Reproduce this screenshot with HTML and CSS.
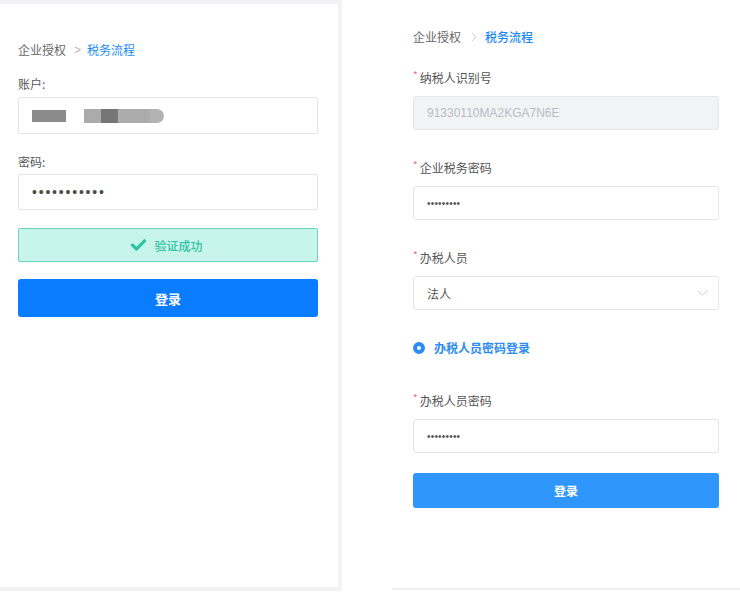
FILE: index.html
```html
<!DOCTYPE html>
<html lang="zh-CN">
<head>
    <meta charset="UTF-8">
    <meta name="viewport" content="width=device-width, initial-scale=1.0">
    <title>税务流程登录</title>
    <link rel="stylesheet" href="styles.css">
</head>
<body>
    <div class="page">
        <!-- old login: account + slider check -->
        <div class="frame">
            <div class="card">
                <div class="crumbs">
                    <span class="crumb">企业授权</span>
                    <span class="crumb-sep">&gt;</span>
                    <span class="crumb-current">税务流程</span>
                </div>

                <div class="label">账户:</div>
                <div class="input input-tall">
                    <div class="masked">
                        <span class="blk blk-a"></span>
                        <span class="blk blk-b"></span>
                        <span class="blk blk-c"></span>
                        <span class="blk blk-d"></span>
                        <span class="blk blk-e"></span>
                    </div>
                </div>

                <div class="label label-gap">密码:</div>
                <div class="input input-pass">
                    <span class="dots">•••••••••••</span>
                </div>

                <div class="verified">
                    <svg width="15" height="12" viewBox="0 0 15 12">
                        <path d="M1.5 6.2 L5.6 10 L13.5 1.8" fill="none" stroke="#2cc3a2" stroke-width="3.2" stroke-linecap="round" stroke-linejoin="round"/>
                    </svg>
                    <span>验证成功</span>
                </div>

                <button class="btn btn-main">登录</button>
            </div>
        </div>

        <!-- new login: tax form -->
        <div class="panel">
            <div class="crumbs crumbs-new">
                <span class="crumb">企业授权</span>
                <svg class="chev" width="6" height="10" viewBox="0 0 6 10">
                    <path d="M1 1 L5 5 L1 9" fill="none" stroke="#cdd0d6" stroke-width="1"/>
                </svg>
                <span class="crumb-current strong">税务流程</span>
            </div>

            <div class="field">
                <div class="flabel"><i>*</i>纳税人识别号</div>
                <div class="box box-disabled">91330110MA2KGA7N6E</div>
            </div>

            <div class="field">
                <div class="flabel"><i>*</i>企业税务密码</div>
                <div class="box"><span class="dots-small">•••••••••</span></div>
            </div>

            <div class="field">
                <div class="flabel"><i>*</i>办税人员</div>
                <div class="box box-select">
                    <span>法人</span>
                    <svg width="11" height="6" viewBox="0 0 11 6">
                        <path d="M0.5 0.5 L5.5 5 L10.5 0.5" fill="none" stroke="#c8cbd1" stroke-width="1"/>
                    </svg>
                </div>
            </div>

            <div class="radio-row">
                <span class="radio"></span>
                <span>办税人员密码登录</span>
            </div>

            <div class="field field-last">
                <div class="flabel"><i>*</i>办税人员密码</div>
                <div class="box"><span class="dots-small">•••••••••</span></div>
            </div>

            <button class="btn btn-soft">登录</button>

            <div class="spacer"></div>
            <div class="baseline"></div>
        </div>
    </div>
</body>
</html>
```

FILE: styles.css
```css
body {
    margin: 0;
    background: #fff;
    font-family: "Noto Sans CJK SC", "Liberation Sans", sans-serif;
    font-size: 12px;
    color: #555;
}
.page {
    display: flex;
    width: 740px;
    height: 595px;
    gap: 50px;
}

/* left */
.frame {
    width: 338px;
    height: 583px;
    padding: 4px 4px 4px 0;
    background: #f3f3f6;
}
.card {
    background: #fff;
    height: 100%;
    padding: 36px 20px 0 18px;
    box-sizing: border-box;
}
.crumbs {
    display: flex;
    align-items: center;
    line-height: 20px;
}
.crumb {
    color: #666;
}
.crumb-sep {
    color: #b8b8b8;
    margin: 0 6px 0 8px;
    font-family: "Liberation Sans", sans-serif;
}
.crumb-current {
    color: #1a8bf5;
}
.strong {
    font-weight: 500;
}
.label {
    line-height: 20px;
    margin-top: 14px;
    color: #555;
}
.label-gap {
    margin-top: 18px;
}
.input {
    margin-top: 3px;
    height: 35px;
    border: 1px solid #e6e6e6;
    border-radius: 2px;
    display: flex;
    align-items: center;
    padding: 0 13px;
}
.input-pass {
    margin-top: 2px;
    height: 34px;
}
.masked {
    display: flex;
    align-items: center;
    filter: blur(0.6px);
}
.blk {
    display: inline-block;
    height: 14px;
}
.blk-a { width: 34px; background: #8b8b8b; margin-right: 18px; height: 12px; }
.blk-b { width: 17px; background: #ababab; }
.blk-c { width: 17px; background: #767676; }
.blk-d { width: 32px; background: #acacac; }
.blk-e { width: 14px; background: #b3b3b3; border-radius: 0 7px 7px 0; }
.dots {
    font-size: 14px;
    letter-spacing: 1.8px;
    color: #4a4a4a;
    font-family: "Liberation Sans", sans-serif;
}
.verified {
    margin-top: 18px;
    height: 32px;
    background: #c7f5eb;
    border: 1px solid #67d6c1;
    border-radius: 2px;
    display: flex;
    align-items: center;
    justify-content: center;
    gap: 8px;
    color: #33c2a4;
    font-weight: 500;
    padding-right: 2px;
}
.btn {
    display: block;
    width: 100%;
    border: none;
    border-radius: 3px;
    color: #fff;
    font-family: inherit;
    font-weight: 700;
    padding: 0;
}
.btn-main {
    margin-top: 17px;
    height: 38px;
    background: #0a7cff;
    font-size: 13px;
}

/* right */
.panel {
    flex: 1;
    padding: 27px 21px 0 21px;
    display: flex;
    flex-direction: column;
}
.crumbs-new .chev {
    margin: 0 8px 0 10px;
}
.field {
    margin-top: 21px;
}
.field + .field {
    margin-top: 28px;
}
.flabel {
    line-height: 20px;
    color: #555;
}
.flabel i {
    font-style: normal;
    color: #f26b6b;
    font-size: 10px;
    vertical-align: top;
    line-height: 14px;
    margin-right: 2px;
}
.box {
    margin-top: 8px;
    height: 32px;
    border: 1px solid #e4e6ea;
    border-radius: 3px;
    display: flex;
    align-items: center;
    padding: 0 13px;
    color: #555;
}
.box-disabled {
    background: #f2f3f5;
    color: #b9bcc2;
    font-family: "Liberation Sans", sans-serif;
    font-size: 12px;
}
.box-select {
    justify-content: space-between;
    padding-right: 10px;
}
.dots-small {
    font-family: "Liberation Sans", sans-serif;
    font-size: 10px;
    letter-spacing: 0.2px;
    color: #555;
}
.radio-row {
    margin-top: 28px;
    display: flex;
    align-items: center;
    gap: 9px;
    line-height: 20px;
    color: #2d8cf0;
    font-weight: 700;
}
.radio {
    width: 4px;
    height: 4px;
    border: 4px solid #2d8cf0;
    border-radius: 50%;
    background: #fff;
}
.field-last {
    margin-top: 33px;
}
.btn-soft {
    margin-top: 20px;
    height: 35px;
    background: #2e96fc;
    font-size: 12px;
}
.spacer {
    flex: 1;
}
.baseline {
    height: 2px;
    background: #eef0f5;
    margin: 0 -21px 5px -21px;
}
```
